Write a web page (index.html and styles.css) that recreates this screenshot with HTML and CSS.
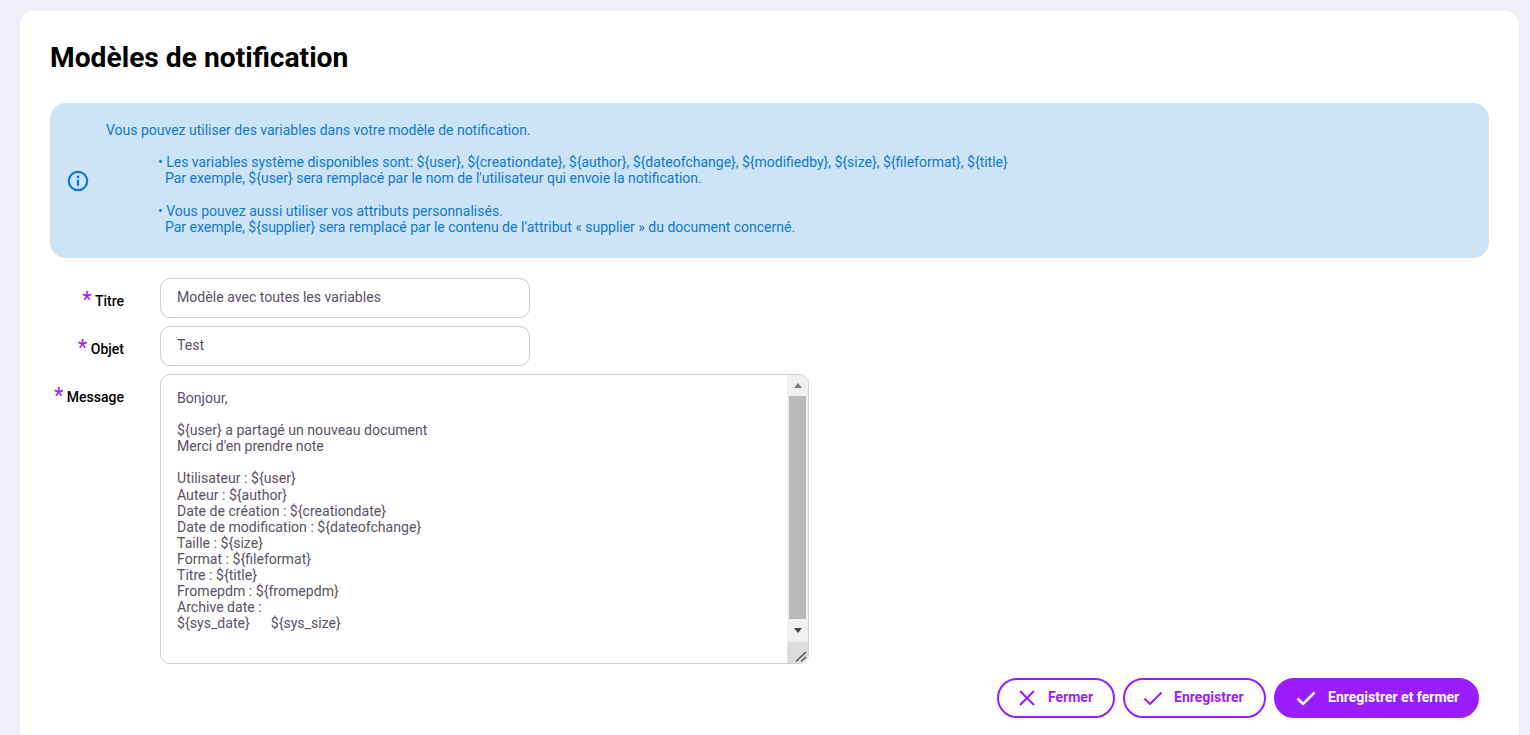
FILE: index.html
```html
<!DOCTYPE html>
<html lang="fr">
<head>
<meta charset="utf-8">
<title>Modèles de notification</title>
<link rel="stylesheet" href="styles.css">
</head>
<body>
<main class="card">
  <h1 class="title">Modèles de notification</h1>
  <section class="info">
    <svg class="info-icon" viewBox="0 0 22 22" width="22" height="22" aria-hidden="true">
      <circle cx="11" cy="11" r="9.2" fill="none" stroke="currentColor" stroke-width="2.2"/>
      <circle cx="11" cy="6.9" r="1.4" fill="currentColor"/>
      <rect x="9.9" y="9.6" width="2.2" height="6.2" fill="currentColor"/>
    </svg>
    <div class="info-text">
      <p class="info-lead">Vous pouvez utiliser des variables dans votre modèle de notification.</p>
      <ul class="info-list">
        <li>• Les variables système disponibles sont: ${user}, ${creationdate}, ${author}, ${dateofchange}, ${modifiedby}, ${size}, ${fileformat}, ${title}<br><span class="indent">Par exemple, ${user} sera remplacé par le nom de l'utilisateur qui envoie la notification.</span></li>
        <li>• Vous pouvez aussi utiliser vos attributs personnalisés.<br><span class="indent">Par exemple, ${supplier} sera remplacé par le contenu de l’attribut « supplier » du document concerné.</span></li>
      </ul>
    </div>
  </section>
  <form class="form">
    <div class="row">
      <label class="label"><span class="req">*</span> Titre</label>
      <input class="input" type="text" value="Modèle avec toutes les variables">
    </div>
    <div class="row">
      <label class="label"><span class="req">*</span> Objet</label>
      <input class="input" type="text" value="Test">
    </div>
    <div class="row">
      <label class="label"><span class="req">*</span> Message</label>
      <div class="textarea">
        <div class="textarea-text">Bonjour,

${user} a partagé un nouveau document
Merci d'en prendre note

Utilisateur : ${user}
Auteur : ${author}
Date de création : ${creationdate}
Date de modification : ${dateofchange}
Taille : ${size}
Format : ${fileformat}
Titre : ${title}
Fromepdm : ${fromepdm}
Archive date :
${sys_date}      ${sys_size}</div>
        <div class="scrollbar">
          <div class="sb-btn sb-btn-up"><span class="arrow-up"></span></div>
          <div class="sb-thumb"></div>
          <div class="sb-btn sb-btn-down"><span class="arrow-down"></span></div>
          <div class="sb-corner">
            <svg viewBox="0 0 21 21" width="21" height="21" aria-hidden="true">
              <path d="M9 19.5 L19 10 M14 19.5 L19 15" fill="none" stroke="#555" stroke-width="1.6"/>
            </svg>
          </div>
        </div>
      </div>
    </div>
    <div class="actions">
      <button class="btn btn-close" type="button">
        <svg viewBox="0 0 18 18" width="18" height="18" aria-hidden="true"><path d="M2 2 L16 16 M16 2 L2 16" fill="none" stroke="currentColor" stroke-width="2"/></svg>
        <span>Fermer</span>
      </button>
      <button class="btn btn-save" type="button">
        <svg viewBox="0 0 20 16" width="20" height="16" aria-hidden="true"><path d="M1.5 8.5 L7 14 L18.5 2.5" fill="none" stroke="currentColor" stroke-width="2"/></svg>
        <span>Enregistrer</span>
      </button>
      <button class="btn btn-primary" type="button">
        <svg viewBox="0 0 20 16" width="20" height="16" aria-hidden="true"><path d="M1.5 8.5 L7 14 L18.5 2.5" fill="none" stroke="currentColor" stroke-width="2.6"/></svg>
        <span>Enregistrer et fermer</span>
      </button>
    </div>
  </form>
</main>
</body>
</html>
```
FILE: styles.css
```css
* { box-sizing: border-box; }
html, body { height: 100%; }
body {
  margin: 0;
  padding: 11px 11px 0 20px;
  background: #edeef8;
  font-family: Roboto, "Liberation Sans", sans-serif;
  overflow: hidden;
}
.card {
  background: #fff;
  border-radius: 14px 14px 0 0;
  height: 724px;
  padding: 30px 30px 0;
}
.title {
  margin: 0 0 29px;
  height: 33px;
  font-size: 28.2px;
  line-height: 33px;
  font-weight: 700;
  color: #000;
}
.info {
  display: flex;
  align-items: center;
  height: 155px;
  background: #cde3f6;
  border-radius: 16px;
  padding-left: 17px;
  color: #0f78d1;
  font-size: 13.99px;
  line-height: 16.1px;
}
.info-icon { flex: none; margin-top: 1px; }
.info-text { margin: 0 0 4px 17px; }
.info-lead { margin: 0 0 16px; }
.info-list { list-style: none; margin: 0; padding: 0 0 0 52px; }
.info-list li + li { margin-top: 17px; }
.indent { padding-left: 7px; }
.form { padding-top: 20px; }
.row { display: flex; align-items: flex-start; margin-bottom: 8px; }
.label {
  width: 74px;
  margin-right: 36px;
  padding-top: 15px;
  text-align: right;
  white-space: nowrap;
  font-size: 14px;
  line-height: 17px;
  font-weight: 500;
  color: #000;
}
.req { color: #9a1dff; font-size: 22px; line-height: 14px; font-weight: 400; vertical-align: -1px; }
.input {
  width: 370px;
  height: 40px;
  padding: 0 16px 2px;
  border: 1px solid #cfcfcf;
  border-radius: 10px;
  background: #fff;
  font: 400 14.1px Roboto, sans-serif;
  color: #5b5266;
  outline: none;
}
.textarea {
  display: flex;
  width: 649px;
  height: 290px;
  border: 1px solid #cfcfcf;
  border-radius: 10px;
  overflow: hidden;
}
.textarea-text {
  flex: 1;
  padding: 15px 16px 0;
  white-space: pre-wrap;
  font-size: 14.1px;
  line-height: 16.1px;
  color: #5b5266;
}
.scrollbar {
  flex: none;
  display: flex;
  flex-direction: column;
  width: 21px;
  background: #f0f0f0;
}
.sb-btn { display: flex; align-items: center; justify-content: center; background: #f0f0f0; }
.sb-btn-up { height: 21px; }
.sb-btn-down { height: 23px; }
.sb-thumb { flex: 1; margin: 0 2px; background: #b9b9b9; }
.arrow-up { border: 4.5px solid transparent; border-top: 0; border-bottom: 5px solid #7c7c7c; }
.arrow-down { border: 4.5px solid transparent; border-bottom: 0; border-top: 5px solid #444; }
.sb-corner { height: 21px; background: #dcdcdc; }
.sb-corner svg { display: block; }
.actions {
  display: flex;
  justify-content: flex-end;
  gap: 8px;
  padding: 6px 10px 0 0;
}
.btn {
  display: flex;
  align-items: center;
  height: 40px;
  border: 2px solid #9a1dff;
  border-radius: 20px;
  background: #fff;
  color: #9a1dff;
  font: 700 14px Roboto, sans-serif;
  padding: 0;
}
.btn span { display: block; padding-bottom: 2px; }
.btn-close { width: 118px; padding-left: 19px; }
.btn-close span { margin-left: 12px; }
.btn-save { width: 143px; padding-left: 18px; }
.btn-save span { margin-left: 11px; }
.btn-primary { width: 205px; padding-left: 20px; background: #9a1dff; color: #fff; }
.btn-primary span { margin-left: 12px; }
```
